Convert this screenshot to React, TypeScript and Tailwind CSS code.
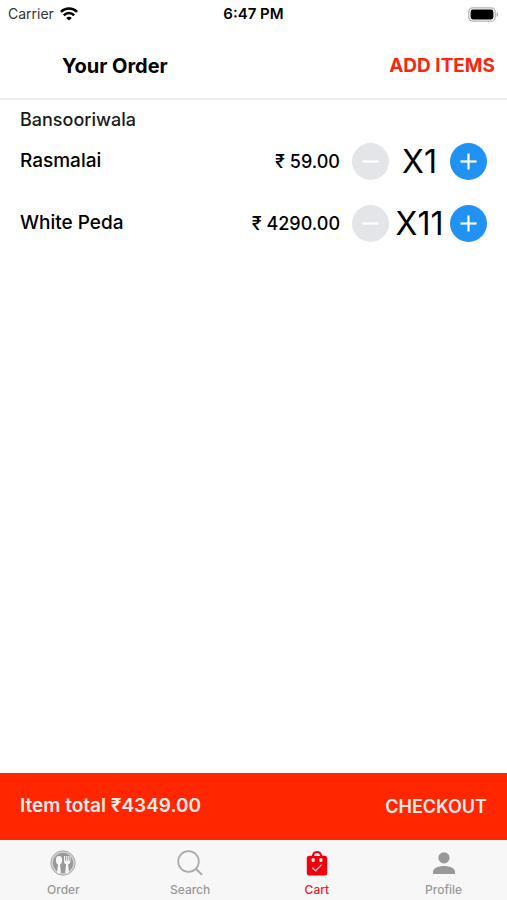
import React, { useState } from 'react';
import clsx from 'clsx';

interface OrderItem {
  id: number;
  name: string;
  price: number;
  quantity: number;
}

const initialItems: OrderItem[] = [
  { id: 1, name: 'Rasmalai', price: 59, quantity: 1 },
  { id: 2, name: 'White Peda', price: 390, quantity: 11 },
];

const WifiIcon = () => (
  <svg viewBox="0 0 18 14" className="h-[14px] w-[18px]" fill="none" stroke="currentColor" strokeWidth="2.5">
    <path d="M0.9 4.9a11.4 11.4 0 0 1 16.2 0" />
    <path d="M3.8 8.3a7.3 7.3 0 0 1 10.4 0" />
    <path d="M9 13.6 6.2 10.9a3.9 3.9 0 0 1 5.6 0z" fill="currentColor" stroke="none" />
  </svg>
);

const BatteryIcon = () => (
  <svg viewBox="0 0 31 15" className="h-[15px] w-[31px]">
    <rect x="0.8" y="0.8" width="26.4" height="13.4" rx="4" fill="#fff" stroke="#b4b4b4" strokeWidth="1.3" />
    <rect x="2.6" y="2.6" width="22.8" height="9.8" rx="2.3" fill="#000" />
    <path d="M28.6 5.2c2 .6 2 4 0 4.6z" fill="#a9a9a9" />
  </svg>
);

const OrderIcon = () => (
  <svg viewBox="0 0 26 26" className="size-[26px]">
    <circle cx="13" cy="13" r="12.2" fill="#d2d2d2" stroke="#a5a5a5" strokeWidth="0.9" />
    <circle cx="13" cy="13" r="10.2" fill="#999" />
    <g fill="#f7f7f7">
      <ellipse cx="9" cy="10.2" rx="3.1" ry="4.2" />
      <path d="M8.2 13h1.6l1 8.8a1.8 1.8 0 0 1-3.6 0z" />
      <path d="M14 6h1v4.7h.9V6h1v4.7h.9V6h1v4.7h.9V6h.8v5.2c0 1.7-1.1 2.7-2.4 3l.8 7.6a1.8 1.8 0 0 1-3.6 0l.8-7.6c-1.3-.3-2.1-1.3-2.1-3z" />
    </g>
  </svg>
);

const SearchIcon = () => (
  <svg viewBox="0 0 26 26" className="size-[26px]" fill="none" stroke="#aaa" strokeWidth="1.7">
    <circle cx="11.5" cy="11.5" r="10.3" />
    <path d="m19 19 6 5.8" strokeWidth="2" />
  </svg>
);

const CartIcon = () => (
  <svg viewBox="0 0 26 26" className="size-[26px]">
    <path d="M9 9V5.2a4.1 4.1 0 0 1 8 0V9" fill="none" stroke="#f5000a" strokeWidth="2" />
    <rect x="2.8" y="5.8" width="20.4" height="19.8" rx="2.5" fill="#f5000a" />
    <path d="M10.2 6a2.9 2.9 0 0 1 5.6 0z" fill="#f7f7f7" />
    <rect x="7.6" y="8.2" width="3" height="3.7" rx="1" fill="#f7f7f7" />
    <rect x="15.4" y="8.2" width="3" height="3.7" rx="1" fill="#f7f7f7" />
    <path d="m8.3 17.8 3.3 3 6-6.2" fill="none" stroke="#fbd0d0" strokeWidth="1.3" />
  </svg>
);

const ProfileIcon = () => (
  <svg viewBox="0 0 26 26" className="size-[26px]" fill="#999">
    <circle cx="13" cy="7.8" r="5.6" />
    <path d="M2 24v-2c0-3.6 5-5.9 11-5.9s11 2.3 11 5.9v2z" />
  </svg>
);

const tabs = [
  { label: 'Order', icon: OrderIcon },
  { label: 'Search', icon: SearchIcon },
  { label: 'Cart', icon: CartIcon },
  { label: 'Profile', icon: ProfileIcon },
];

interface RoundButtonProps {
  label: string;
  plus?: boolean;
  onClick: () => void;
}

const RoundButton: React.FC<RoundButtonProps> = ({ label, plus, onClick }) => (
  <button
    type="button"
    aria-label={label}
    onClick={onClick}
    className={clsx(
      'flex size-[37px] shrink-0 items-center justify-center rounded-full text-white',
      plus ? 'bg-[#2092f4]' : 'bg-[#e3e5e8]'
    )}
  >
    <svg viewBox="0 0 17 17" className="size-[17px]" fill="none" stroke="currentColor" strokeWidth="2.2">
      <path d="M0.5 8.5h16" />
      {plus && <path d="M8.5 0.5v16" />}
    </svg>
  </button>
);

export default function App() {
  const [items, setItems] = useState(initialItems);
  const [activeTab, setActiveTab] = useState('Cart');

  const total = items.reduce((sum, item) => sum + item.price * item.quantity, 0);

  const changeQuantity = (id: number, delta: number) => {
    setItems((prev) =>
      prev.map((item) =>
        item.id === id ? { ...item, quantity: Math.max(1, item.quantity + delta) } : item
      )
    );
  };

  return (
    <div className="flex min-h-screen flex-col bg-white font-['Inter','Noto_Sans',sans-serif] text-black">
      <div className="grid h-7 grid-cols-3 items-center px-2 text-sm">
        <div className="flex items-center gap-1.5 text-[#333]">
          <span>Carrier</span>
          <span className="text-black">
            <WifiIcon />
          </span>
        </div>
        <span className="text-center text-[15px] font-semibold">6:47 PM</span>
        <div className="flex justify-end">
          <BatteryIcon />
        </div>
      </div>

      <header className="flex h-18 items-center justify-between border-b-2 border-[#ebebeb] pt-1.5 pr-3 pl-[62px]">
        <h1 className="text-xl font-bold">Your Order</h1>
        <button type="button" className="text-[19px] font-bold text-[#fb260b]">
          ADD ITEMS
        </button>
      </header>

      <main className="flex-1 px-5 pt-2">
        <h2 className="text-lg leading-6 font-medium text-[#1a1a1a]">Bansooriwala</h2>
        <ul>
          {items.map((item) => (
            <li key={item.id} className="flex h-[62px] items-start">
              <div className="flex flex-1 items-center pt-[11px]">
                <span className="flex-1 text-[19px] font-medium">{item.name}</span>
                <span className="mr-3 text-lg font-medium">₹ {(item.price * item.quantity).toFixed(2)}</span>
                <RoundButton label={`Remove one ${item.name}`} onClick={() => changeQuantity(item.id, -1)} />
                <span className="w-[61px] text-center text-[32px] leading-9">X{item.quantity}</span>
                <RoundButton plus label={`Add one ${item.name}`} onClick={() => changeQuantity(item.id, 1)} />
              </div>
            </li>
          ))}
        </ul>
      </main>

      <div className="flex h-[67px] items-center justify-between bg-[#ff2600] px-5 font-semibold text-[#ffece8]">
        <span className="text-[19px]">Item total ₹{total.toFixed(2)}</span>
        <button type="button" className="text-lg">
          CHECKOUT
        </button>
      </div>

      <nav className="grid h-15 grid-cols-4 bg-[#f7f7f7]">
        {tabs.map(({ label, icon: Icon }) => (
          <button
            key={label}
            type="button"
            onClick={() => setActiveTab(label)}
            className={clsx(
              'flex flex-col items-center gap-1.5 pt-2.5 text-xs font-medium',
              activeTab === label ? 'text-[#e8202a]' : 'text-[#999]'
            )}
          >
            <Icon />
            <span>{label}</span>
          </button>
        ))}
      </nav>
    </div>
  );
}
